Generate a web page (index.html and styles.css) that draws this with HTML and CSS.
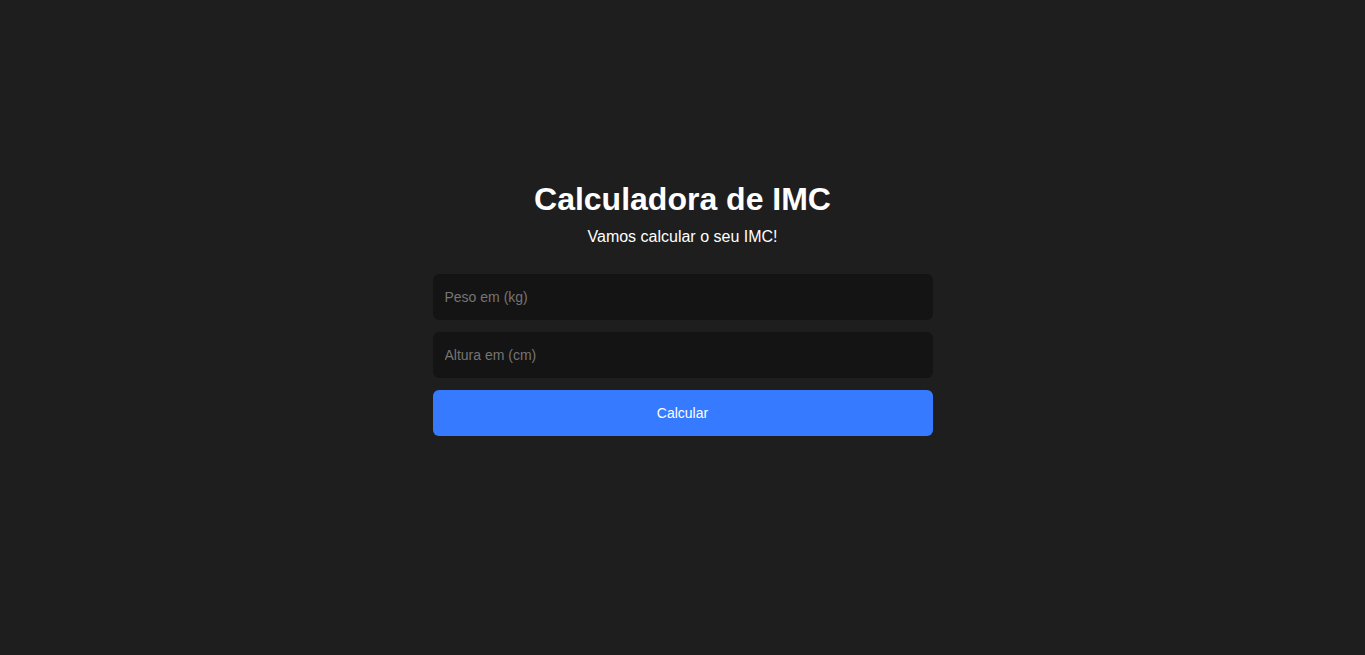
FILE: index.html
```html
<!DOCTYPE html>
<html lang="pt-BR">
<head>
<meta charset="utf-8">
<title>Calculadora de IMC</title>
<link rel="stylesheet" href="styles.css">
</head>
<body>
<main class="container">
  <h1 class="title">Calculadora de IMC</h1>
  <p class="subtitle">Vamos calcular o seu IMC!</p>
  <form class="form">
    <input class="field" type="number" placeholder="Peso em (kg)">
    <input class="field" type="number" placeholder="Altura em (cm)">
    <button class="btn" type="button">Calcular</button>
  </form>
</main>
</body>
</html>
```

FILE: styles.css
```css
* { box-sizing: border-box; }
html, body { margin: 0; padding: 0; }
body {
  background: #1e1e1e;
  color: #fff;
  font-family: "Liberation Sans", Arial, sans-serif;
  min-height: 100vh;
}
.container {
  width: 500px;
  margin: 0 auto;
  padding-top: 181px;
  display: flex;
  flex-direction: column;
  align-items: center;
}
.title {
  margin: 0;
  font-size: 32px;
  font-weight: 700;
  line-height: 37px;
}
.subtitle {
  margin: 9px 0 0;
  font-size: 16px;
  line-height: 19px;
}
.form {
  width: 100%;
  margin-top: 28px;
  display: flex;
  flex-direction: column;
  gap: 12px;
}
.field {
  height: 46px;
  border: none;
  border-radius: 6px;
  background: #141414;
  color: #fff;
  padding: 0 12px;
  font-family: inherit;
  font-size: 14px;
  outline: none;
}
.field::placeholder { color: #757575; }
.btn {
  height: 46px;
  border: none;
  border-radius: 6px;
  background: #367aff;
  color: #fff;
  font-family: inherit;
  font-size: 14px;
  cursor: pointer;
}
```
